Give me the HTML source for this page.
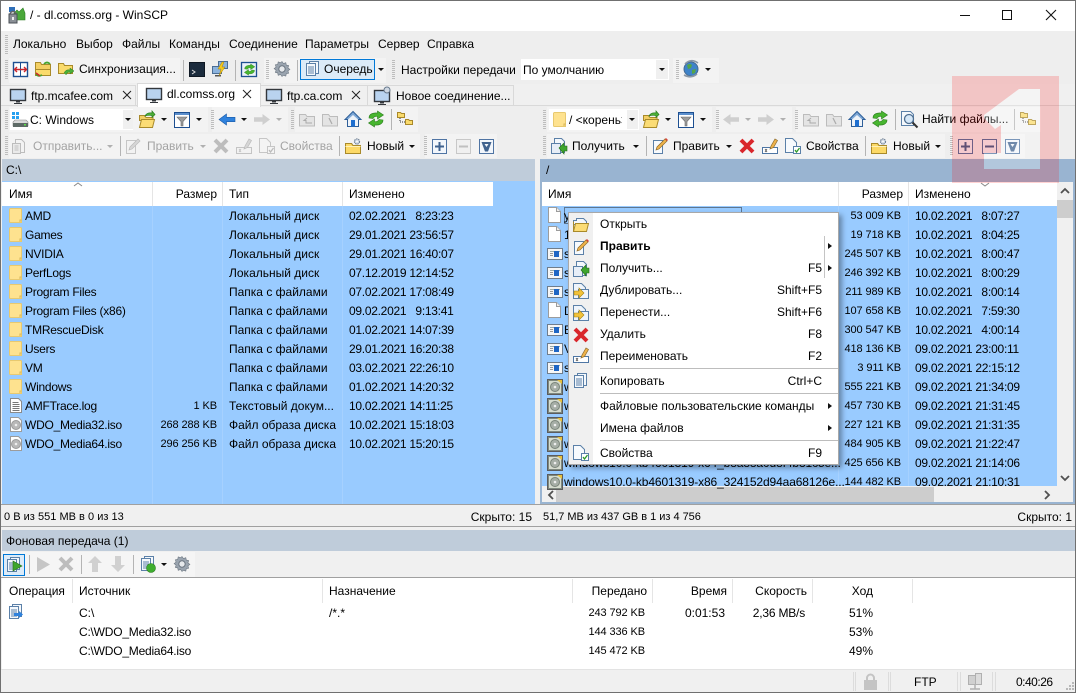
<!DOCTYPE html>
<html lang="ru"><head><meta charset="utf-8"><title>WinSCP</title>
<style>
html,body{margin:0;padding:0}
body{width:1076px;height:693px;position:relative;overflow:hidden;background:#f0f0f0;font:12px/14px "Liberation Sans",sans-serif;color:#000}
.b{position:absolute}
.t,.r span{position:absolute;white-space:nowrap}
.r{position:absolute;left:0;top:0;width:0;height:14px}
.g{color:#a3a3a3}
.n{left:25px;letter-spacing:-.25px}.s{left:100px;width:117px;text-align:right;font-size:11px;letter-spacing:-.1px}.y{left:229px}.d{left:349px;letter-spacing:-.28px}
.N{left:564px;letter-spacing:-.12px}.S{left:760px;width:141px;text-align:right;font-size:11px;letter-spacing:-.1px}.D{left:915px;letter-spacing:-.28px}
.R{text-align:right}
.q{font-size:11px;letter-spacing:-.1px}
svg{position:absolute;left:0;top:0;overflow:visible}
</style></head><body>

<!-- chrome backgrounds -->
<div class="b" style="left:0;top:0;width:1076px;height:31px;background:#fff"></div>
<div class="b" style="left:0;top:31px;width:1076px;height:129px;background:#eeeeee"></div>
<div class="b" style="left:9px;top:58px;width:171px;height:25px;background:#f3f3f3"></div>
<div class="b" style="left:264px;top:58px;width:122px;height:25px;background:#f3f3f3"></div>
<div class="b" style="left:673px;top:58px;width:46px;height:25px;background:#f3f3f3"></div>
<div class="b" style="left:9px;top:107px;width:199px;height:25px;background:#f3f3f3"></div>
<div class="b" style="left:212px;top:107px;width:76px;height:25px;background:#f3f3f3"></div>
<div class="b" style="left:295px;top:107px;width:123px;height:25px;background:#f3f3f3"></div>
<div class="b" style="left:9px;top:134px;width:411px;height:24px;background:#f3f3f3"></div>
<div class="b" style="left:425px;top:134px;width:72px;height:24px;background:#f3f3f3"></div>
<div class="b" style="left:547px;top:107px;width:165px;height:25px;background:#f3f3f3"></div>
<div class="b" style="left:716px;top:107px;width:76px;height:25px;background:#f3f3f3"></div>
<div class="b" style="left:796px;top:107px;width:245px;height:25px;background:#f3f3f3"></div>
<div class="b" style="left:547px;top:134px;width:398px;height:24px;background:#f3f3f3"></div>
<div class="b" style="left:950px;top:134px;width:75px;height:24px;background:#f3f3f3"></div>
<div class="b" style="left:0;top:84px;width:1076px;height:21px;background:#f0f0f0"></div>
<div class="b" style="left:0;top:105px;width:1076px;height:1px;background:#d9d9d9"></div>
<!-- tabs -->
<div class="b" style="left:0;top:85px;width:136px;height:20px;border-right:1px solid #d9d9d9;border-top:1px solid #d9d9d9;box-sizing:border-box"></div>
<div class="b" style="left:261px;top:85px;width:107px;height:20px;border-right:1px solid #d9d9d9;border-top:1px solid #d9d9d9;box-sizing:border-box"></div>
<div class="b" style="left:368px;top:85px;width:146px;height:20px;border-right:1px solid #d9d9d9;border-top:1px solid #d9d9d9;box-sizing:border-box"></div>
<div class="b" style="left:137px;top:83px;width:124px;height:24px;background:#fff;border:1px solid #d9d9d9;border-bottom:0;box-sizing:border-box"></div>

<!-- comboboxes -->
<div class="b" style="left:521px;top:59px;width:148px;height:21px;background:#fff"></div>
<div class="b" style="left:656px;top:60px;width:12px;height:19px;background:#f0f0f0"></div>
<div class="b" style="left:10px;top:109px;width:123px;height:21px;background:#fff"></div>
<div class="b" style="left:123px;top:110px;width:10px;height:19px;background:#f0f0f0"></div>
<div class="b" style="left:549px;top:109px;width:90px;height:21px;background:#fff"></div>
<div class="b" style="left:627px;top:110px;width:11px;height:19px;background:#f0f0f0"></div>

<!-- queue button -->
<div class="b" style="left:300px;top:59px;width:75px;height:21px;background:#dcebf8;border:1px solid #0078d7;box-sizing:border-box"></div>

<!-- panels -->
<div class="b" style="left:2px;top:159px;width:533px;height:22px;background:#bfccda"></div>
<div class="b" style="left:540px;top:159px;width:536px;height:22px;background:#99b4d1"></div>
<div class="b" style="left:2px;top:181px;width:533px;height:323px;background:#99cbff"></div>
<div class="b" style="left:2px;top:182px;width:491px;height:24px;background:#fff"></div>
<div class="b" style="left:540px;top:181px;width:535px;height:323px;background:#f0f0f0;border:2px solid #99b4d1;border-top:1px solid #99b4d1;box-sizing:border-box"></div>
<div class="b" style="left:542px;top:206px;width:515px;height:280px;background:#99cbff"></div>
<div class="b" style="left:542px;top:182px;width:515px;height:24px;background:#fff"></div>
<div class="b" style="left:1057px;top:200px;width:16px;height:18px;background:#cdcdcd"></div>
<div class="b" style="left:556px;top:487px;width:378px;height:15px;background:#cdcdcd"></div>
<!-- header separators -->
<div class="b" style="left:152px;top:182px;width:1px;height:24px;background:#e5e5e5"></div>
<div class="b" style="left:222px;top:182px;width:1px;height:24px;background:#e5e5e5"></div>
<div class="b" style="left:342px;top:182px;width:1px;height:24px;background:#e5e5e5"></div>
<div class="b" style="left:838px;top:182px;width:1px;height:24px;background:#e5e5e5"></div>
<div class="b" style="left:908px;top:182px;width:1px;height:24px;background:#e5e5e5"></div>
<!-- row separators -->
<div class="b" style="left:152px;top:206px;width:1px;height:298px;background:#a6d1ff"></div>
<div class="b" style="left:222px;top:206px;width:1px;height:298px;background:#a6d1ff"></div>
<div class="b" style="left:342px;top:206px;width:1px;height:298px;background:#a6d1ff"></div>
<div class="b" style="left:838px;top:206px;width:1px;height:280px;background:#a6d1ff"></div>
<div class="b" style="left:908px;top:206px;width:1px;height:280px;background:#a6d1ff"></div>

<!-- lower chrome -->
<div class="b" style="left:0;top:504px;width:1076px;height:1px;background:#a0a0a0"></div>
<div class="b" style="left:0;top:526px;width:1076px;height:1px;background:#a0a0a0"></div>
<div class="b" style="left:2px;top:530px;width:1074px;height:21px;background:#bfccda"></div>
<div class="b" style="left:3px;top:552px;width:192px;height:25px;background:#f5f5f5"></div>
<div class="b" style="left:0;top:577px;width:1076px;height:1px;background:#a0a0a0"></div>
<div class="b" style="left:2px;top:578px;width:1073px;height:91px;background:#fff"></div>
<div class="b" style="left:0;top:669px;width:1076px;height:1px;background:#e3e3e3"></div>
<div class="b" style="left:72px;top:579px;width:1px;height:24px;background:#e5e5e5"></div>
<div class="b" style="left:322px;top:579px;width:1px;height:24px;background:#e5e5e5"></div>
<div class="b" style="left:572px;top:579px;width:1px;height:24px;background:#e5e5e5"></div>
<div class="b" style="left:652px;top:579px;width:1px;height:24px;background:#e5e5e5"></div>
<div class="b" style="left:732px;top:579px;width:1px;height:24px;background:#e5e5e5"></div>
<div class="b" style="left:812px;top:579px;width:1px;height:24px;background:#e5e5e5"></div>
<div class="b" style="left:912px;top:579px;width:1px;height:24px;background:#e5e5e5"></div>
<!-- status panels -->
<div class="b" style="left:853px;top:672px;width:1px;height:19px;background:#dcdcdc"></div>
<div class="b" style="left:855px;top:672px;width:1px;height:19px;background:#dcdcdc"></div>
<div class="b" style="left:888px;top:672px;width:1px;height:19px;background:#dcdcdc"></div>
<div class="b" style="left:890px;top:672px;width:1px;height:19px;background:#dcdcdc"></div>
<div class="b" style="left:957px;top:672px;width:1px;height:19px;background:#dcdcdc"></div>
<div class="b" style="left:960px;top:672px;width:1px;height:19px;background:#dcdcdc"></div>
<div class="b" style="left:992px;top:672px;width:1px;height:19px;background:#dcdcdc"></div>
<div class="b" style="left:995px;top:672px;width:1px;height:19px;background:#dcdcdc"></div>

<!-- base icons -->
<svg width="1076" height="693" viewBox="0 0 1076 693">
<defs>
<path id="ar" d="M0 0h6l-3 3z" fill="#111"/>
<path id="arg" d="M0 0h6l-3 3z" fill="#b0b0b0"/>
<path id="grip" d="M1.500 0V20" stroke="#bdbdbd" stroke-width="3" stroke-dasharray="1 1" fill="none"/>
<g id="fo"><path d="M.5 1.500a1 1 0 0 1 1-1h10a1 1 0 0 1 1 1v13h-11a1 1 0 0 1-1-1z" fill="#fee28f" stroke="#e8c96f"/><path d="M11 14v-2h1.500" fill="none" stroke="#d8b65a"/></g>
<g id="fi"><path d="M1.500.5h8l4 4v11h-12z" fill="#fff" stroke="#9c9c9c"/><path d="M9.500.5v4h4" fill="#eee" stroke="#9c9c9c"/></g>
<g id="lo"><path d="M1.500.5h8l3 3v11h-11z" fill="#fff" stroke="#8a8a8a"/><path d="M3.500 4.500h6M3.500 6.500h7M3.500 8.500h7M3.500 10.500h7M3.500 12.500h7" stroke="#777"/></g>
<g id="is"><path d="M1.500.5h8l3 3v11h-11z" fill="#fff" stroke="#9c9c9c"/><circle cx="7" cy="8" r="4.500" fill="#b8b8b8" stroke="#9a9a9a"/><circle cx="7" cy="8" r="1.300" fill="#eee"/></g>
<g id="ex"><rect x=".5" y="2.500" width="15" height="11" fill="#f6f6f6" stroke="#6f7d8c"/><rect x="3" y="5" width="10" height="1" fill="#9aa"/><rect x="7" y="5" width="5" height="6" fill="#1f66c4"/><path d="M3 7.500h3M3 9.500h3" stroke="#999"/></g>
<g id="ms"><rect x=".5" y="1.500" width="15" height="15" fill="#7f897f" stroke="#5c5c5c"/><rect x="2" y="3" width="12" height="12" fill="#d6dccf"/><circle cx="8" cy="9" r="4.500" fill="#a6aea6" stroke="#7a847a"/><circle cx="8" cy="9" r="1.300" fill="#eee"/><path d="M10 2h5v4z" fill="#e8c13c"/></g>
<g id="op"><path d="M.5 3.500h5l1.500 2h7v3H.5z" fill="#f3cf63" stroke="#a98a2a"/><path d="M.5 15.500l2-8h13l-2 8z" fill="#fbdc75" stroke="#a98a2a"/><path d="M6 4q2-4 7-3V-1l3 3.500-3 3V3.500q-4-.5-7 .5z" fill="#4caf38" stroke="#2b7d20" stroke-width=".7"/></g>
<g id="op2"><path d="M.5 4.500h3v-2h7l3 3v3H.5z" fill="#f3f7fb" stroke="#5b80a8"/><path d="M.5 15.500l2-8h13l-2 8z" fill="#fbdc75" stroke="#a98a2a"/><path d="M.5 15.500v-10" stroke="#a98a2a"/></g>
<g id="fl"><rect x=".5" y=".5" width="15" height="15" fill="#fff" stroke="#1d4f91"/><rect x="1" y="1" width="14" height="2" fill="#5c8fcc"/><path d="M3 5h10l-4 4.500v4.500h-2v-4.500z" fill="#9c9c9c" stroke="#6b6b6b" stroke-width=".6"/></g>
<path id="bk" d="M0 6.500L7.500 1v3.300H16v4.400H7.500V12z" fill="#2f82dd" stroke="#1c5ca8" stroke-width=".6"/>
<path id="bkg" d="M0 6.500L7.500 1v3.300H16v4.400H7.500V12z" fill="#cfcfcf"/>
<path id="fwg" d="M16 6.500L8.500 1v3.300H0v4.400h8.500V12z" fill="#cfcfcf"/>
<g id="pa"><path d="M.5 3.500h6l1.500 2h7.500v9.500H.5z" fill="#e4e4e4" stroke="#bcbcbc"/><path d="M8 7l-3 2.500h2v2.500h6" fill="none" stroke="#aaa"/></g>
<g id="ro"><path d="M.5 3.500h6l1.500 2h7.500v9.500H.5z" fill="#e4e4e4" stroke="#bcbcbc"/><path d="M7 7l3 6" fill="none" stroke="#aaa" stroke-width="1.200"/></g>
<g id="ho"><path d="M8 .5L0 8.500h2.500v7h11v-7H16z" fill="#7da7d6" stroke="#2e5f99"/><path d="M3 8.500L8 4l5 4.500v6.500H3z" fill="#eef3f9"/><rect x="6" y="9" width="4" height="6.500" fill="#1e6fd0"/></g>
<g id="rf"><path d="M1 7C1 3 5 1.500 9.500 2V0L15.500 4 9.500 8V5.500C7.500 5 5.500 6 5 7.500z" fill="#47b52f" stroke="#2c7d1e" stroke-width=".6"/><path d="M15 9C15 13 11 14.500 6.500 14V16L.5 12 6.500 8V10.500C8.500 11 10.500 10 11 8.500z" fill="#47b52f" stroke="#2c7d1e" stroke-width=".6"/></g>
<g id="tr"><path d="M.5 1.500h3l1 1h3v4h-7z" fill="#fadb6c" stroke="#a9882a"/><path d="M8.500 8.500h3l1 1h3v4h-7z" fill="#fadb6c" stroke="#a9882a"/><path d="M3 7v4h5" fill="none" stroke="#333" stroke-dasharray="1 1"/></g>
<g id="du"><path d="M3.500 1.500h6l3 3v10h-9z" fill="#f3f3f3" stroke="#bdbdbd"/><rect x=".5" y="5.500" width="8" height="10" fill="#eaeaea" stroke="#bdbdbd"/><path d="M2.500 8h4M2.500 10h4M2.500 12h4" stroke="#c0c0c0"/></g>
<g id="xg"><path d="M2 2l12 12M14 2L2 14" stroke="#bdbdbd" stroke-width="4"/></g>
<g id="xr"><path d="M2 2l12 12M14 2L2 14" stroke="#d9262b" stroke-width="4"/></g>
<g id="ed"><path d="M1.500 2.500h9v13h-9z" fill="#f7fafd" stroke="#5b80a8"/><path d="M4 12l1-3 8-8 2 2-8 8z" fill="#efb34a" stroke="#8c6a2c" stroke-width=".7"/><path d="M13 1l2 2 1-1-2-2z" fill="#d9413a"/></g>
<g id="edg"><path d="M1.500 2.500h9v13h-9z" fill="#f2f2f2" stroke="#c6c6c6"/><path d="M4 12l1-3 8-8 2 2-8 8z" fill="#d6d6d6" stroke="#bbb" stroke-width=".7"/></g>
<g id="rn"><rect x=".5" y="8.500" width="15" height="6" fill="#fff" stroke="#4e76a4"/><path d="M3 10l2 3M5 10l-2 3" stroke="#555" stroke-width=".8"/><path d="M8 10l1-3 4-7 2.500 1.500-4 7z" fill="#efb34a" stroke="#8c6a2c" stroke-width=".7"/></g>
<g id="rng"><rect x=".5" y="8.500" width="15" height="6" fill="#f2f2f2" stroke="#c4c4c4"/><path d="M3 10l2 3M5 10l-2 3" stroke="#c0c0c0" stroke-width=".8"/><path d="M8 10l1-3 4-7 2.500 1.500-4 7z" fill="#d6d6d6" stroke="#bbb" stroke-width=".7"/></g>
<g id="pr"><path d="M.5.500h7l4 4v10h-11z" fill="#f7fafd" stroke="#5b80a8"/><rect x="8.500" y="8.500" width="7" height="7" fill="#fff" stroke="#5b80a8"/><path d="M10 12l1.500 2 3-4" fill="none" stroke="#2f9a2a" stroke-width="1.300"/></g>
<g id="prg"><path d="M.5.500h7l4 4v10h-11z" fill="#f4f4f4" stroke="#c6c6c6"/><rect x="8.500" y="8.500" width="7" height="7" fill="#f4f4f4" stroke="#c6c6c6"/><path d="M10 12l1.500 2 3-4" fill="none" stroke="#bbb" stroke-width="1.300"/></g>
<g id="nw"><path d="M.5 5.500h6l1.500 2h7.500v8H.5z" fill="#fcd967" stroke="#a98a2a"/><path d="M.5 5.500h6l1.500 2" fill="none" stroke="#a98a2a"/><path d="M.5 8.500h15" stroke="#fff2b8"/><circle cx="12" cy="3.500" r="2.600" fill="#cfd8e3" stroke="#66788c" stroke-dasharray="1.500 .7"/><circle cx="12" cy="3.500" r=".9" fill="#fff"/></g>
<g id="pl"><rect x=".5" y=".5" width="14" height="14" fill="#f2f6fb" stroke="#4f74a3"/><path d="M3 7.500h9M7.500 3v9" stroke="#3f628f" stroke-width="2"/></g>
<g id="mb"><rect x=".5" y=".5" width="14" height="14" fill="#f2f6fb" stroke="#4f74a3"/><path d="M3 7.500h9" stroke="#3f628f" stroke-width="2"/></g>
<g id="mi"><rect x=".5" y=".5" width="14" height="14" fill="#f0f0f0" stroke="#c8c8c8"/><path d="M3 7.500h9" stroke="#c0c0c0" stroke-width="2"/></g>
<g id="fa"><rect x=".5" y=".5" width="14" height="14" fill="#f2f6fb" stroke="#4f74a3"/><path d="M2.500 3h10L9 12.500H6z" fill="#3f628f"/><path d="M5.500 5h4L7.500 8z" fill="#f2f6fb"/></g>
<g id="ge"><path d="M8 .5l1.500 2 2.300-.8.500 2.400 2.400.5-.8 2.300 2 1.500-2 1.500.8 2.300-2.400.5-.5 2.400-2.300-.8L8 15.500l-1.500-2-2.300.8-.5-2.400-2.400-.5.8-2.300-2-1.500 2-1.500-.8-2.300 2.400-.5.5-2.400 2.300.8z" fill="#9aa4af" stroke="#6d7782" stroke-width=".6"/><circle cx="8" cy="8" r="3.200" fill="#e6e9ec" stroke="#6d7782"/></g>
<g id="mo"><rect x=".5" y=".5" width="15" height="11" fill="#b9d3ef" stroke="#33373c" stroke-width="1.400"/><path d="M6 12h4v1.500H6zM4 14h8v1H4z" fill="#33373c"/></g>
<g id="qu"><rect x="5.500" y=".5" width="9" height="12" fill="#f4f8fc" stroke="#5b80a8"/><rect x="2.500" y="2.500" width="9" height="12" fill="#f4f8fc" stroke="#5b80a8"/><path d="M4 6h6M4 8h6M4 10h6M4 12h6" stroke="#5b80a8"/></g>
<g id="gp"><path d="M1.500 0v14" stroke="#bdbdbd" stroke-width="1"/></g>
</defs>

<!-- title icon -->
<rect x="9" y="7" width="6" height="5" fill="#2f6fb8"/>
<path d="M14 13l3-3 2 2 4-4 2 5v7H14z" fill="#4aa83a" stroke="#2b7d20" stroke-width=".6"/>
<path d="M10 14.500a3 3 0 0 1 6 0" fill="none" stroke="#666" stroke-width="1.500"/>
<rect x="9" y="14" width="8" height="9" fill="#8a8f96" stroke="#4a4f55"/>
<rect x="12" y="17" width="2" height="3" fill="#eee"/>
<!-- window buttons -->
<path d="M960 15.500h10" stroke="#111"/>
<rect x="1002.500" y="10.500" width="9" height="9" fill="none" stroke="#111"/>
<path d="M1046 10l10 10M1056 10l-10 10" stroke="#111" stroke-width="1.100"/>
<!-- grips -->
<use href="#grip" x="5" y="35"/><use href="#grip" x="5" y="60"/><use href="#grip" x="5" y="110"/><use href="#grip" x="5" y="136"/>
<use href="#grip" x="266" y="60"/><use href="#grip" x="392" y="60"/><use href="#grip" x="676" y="60"/>
<use href="#grip" x="211" y="110"/><use href="#grip" x="291" y="110"/><use href="#grip" x="424" y="136"/>
<use href="#grip" x="543" y="110"/><use href="#grip" x="543" y="136"/><use href="#grip" x="716" y="110"/><use href="#grip" x="795" y="110"/><use href="#grip" x="950" y="136"/>
<!-- seps -->
<path d="M183.500 60v21M235.500 60v21M297.500 60v21M120.500 136v20M339.500 136v20M391.500 109v21M895.500 109v21M1014.500 109v21M646.500 136v20M865.500 136v20M29.500 555v19M81.500 555v19M133.500 555v19" stroke="#b4b4b4"/>

<!-- row 2 -->
<rect x="13.500" y="62.500" width="14" height="14" fill="#fff" stroke="#1d4f91" stroke-width="1.400"/>
<path d="M20.500 62v15" stroke="#1d4f91"/>
<path d="M15 69.500h11M17 67l-2.500 2.500L17 72M24 67l2.500 2.500L24 72" fill="none" stroke="#c9252b" stroke-width="1.400"/>
<g transform="translate(35 61)"><path d="M.5 1.500h5l1 2h9v5H.5z" fill="#f3cf63" stroke="#a98a2a"/><path d="M.5 8.500h15v6H.5z" fill="#fadb6c" stroke="#a98a2a"/><path d="M9 3q3-3 6 0M1 13q2 3 6 1" fill="none" stroke="#47a52f" stroke-width="1.800"/><path d="M1 12l4 3" stroke="#cf2b2b" stroke-width="1.500"/></g>
<g transform="translate(58 61)"><path d="M.5 2.500h5l1 2h8v8H.5z" fill="#fadb6c" stroke="#a98a2a"/><path d="M6 12q2-4 6-3V7l4 3-4 3v-2q-3 0-4 3" fill="#4caf38" stroke="#2b7d20" stroke-width=".5"/></g>
<rect x="189.500" y="62.500" width="15" height="14" fill="#1b2b3d" stroke="#0e1722"/>
<path d="M192 70l3 2-3 2" fill="none" stroke="#ddd"/>
<g transform="translate(212 61)"><rect x="6.500" y=".5" width="9" height="7" fill="#8cb3dd" stroke="#4b6d94"/><rect x=".5" y="5.500" width="9" height="7" fill="#8cb3dd" stroke="#4b6d94"/><path d="M3 14h6v1.500H3z" fill="#555"/><path d="M10 1l-4 7h3l-2 7 6-9h-3l2-5z" fill="#f4c81c" stroke="#a8820f" stroke-width=".5"/></g>
<rect x="241.500" y="62.500" width="15" height="14" fill="#eaf1f9" stroke="#1d4f91" stroke-width="1.300"/>
<use href="#rf" transform="translate(244 64) scale(.7)"/>
<use href="#ge" x="274" y="61"/>
<use href="#qu" x="304" y="61"/>
<use href="#ar" x="378" y="68"/>
<use href="#ar" x="659" y="68"/>
<g transform="translate(683 61)"><circle cx="8" cy="8" r="7" fill="#3f83c9" stroke="#456a91"/><path d="M4 4q3-2 5 0l-1 3-3 1zM9 9l4-1-1 4-3 1z" fill="#54a548"/><path d="M2 3q6-6 13-1M14 13Q8 18 1 14" fill="none" stroke="#8b98a6" stroke-width="1.600"/></g>
<use href="#ar" x="705" y="68"/>

<!-- tabs -->
<use href="#mo" x="10" y="89"/><path d="M123 91l8 8M131 91l-8 8" stroke="#222"/>
<use href="#mo" x="146" y="88"/><path d="M243 90l8 8M251 90l-8 8" stroke="#222"/>
<use href="#mo" x="266" y="89"/><path d="M352 91l8 8M360 91l-8 8" stroke="#222"/>
<use href="#mo" x="374" y="90"/><circle cx="387" cy="90" r="3" fill="#cfd8e3" stroke="#66788c"/>

<!-- left row 4 -->
<g transform="translate(12 112)"><rect x="0" y="0" width="3" height="3" fill="#26a0f0"/><rect x="4" y="0" width="3" height="3" fill="#26a0f0"/><rect x="0" y="4" width="3" height="3" fill="#26a0f0"/><rect x="4" y="4" width="3" height="3" fill="#26a0f0"/><path d="M1 10l2-2h11l2 2v4H1z" fill="#d9d9d9" stroke="#8a8a8a" stroke-width=".6"/><rect x="1" y="11" width="15" height="4" fill="#5e6a66"/><rect x="12" y="12" width="2" height="1.500" fill="#5fe04a"/></g>
<use href="#ar" x="125" y="118"/>
<use href="#op" x="139" y="112"/><use href="#ar" x="161" y="118"/>
<use href="#fl" x="174" y="112"/><use href="#ar" x="196" y="118"/>
<use href="#bk" x="219" y="113"/><use href="#ar" x="241" y="118"/>
<use href="#fwg" x="254" y="113"/><use href="#arg" x="276" y="118"/>
<use href="#pa" x="299" y="111"/><use href="#ro" x="322" y="111"/><use href="#ho" x="345" y="111"/><use href="#rf" x="368" y="111"/><use href="#tr" x="397" y="111"/>
<!-- left row 5 -->
<use href="#du" x="12" y="138"/><use href="#arg" x="107" y="145"/>
<use href="#edg" x="125" y="138"/><use href="#arg" x="200" y="145"/>
<use href="#xg" x="213" y="138"/><use href="#rng" x="236" y="139"/><use href="#prg" x="259" y="138"/>
<use href="#nw" x="345" y="138"/><use href="#ar" x="409" y="145"/>
<use href="#pl" x="432" y="139"/><use href="#mi" x="456" y="139"/><use href="#fa" x="479" y="139"/>

<!-- right row 4 -->
<use href="#fo" x="553" y="112"/><use href="#ar" x="629" y="118"/>
<use href="#op" x="643" y="112"/><use href="#ar" x="665" y="118"/>
<use href="#fl" x="678" y="112"/><use href="#ar" x="700" y="118"/>
<use href="#bkg" x="723" y="113"/><use href="#arg" x="745" y="118"/>
<use href="#fwg" x="758" y="113"/><use href="#arg" x="780" y="118"/>
<use href="#pa" x="803" y="111"/><use href="#ro" x="826" y="111"/><use href="#ho" x="849" y="111"/><use href="#rf" x="872" y="111"/>
<g transform="translate(901 111)"><path d="M.5.500h9l3 3v11H.5z" fill="#f4f8fc" stroke="#5b80a8"/><circle cx="8" cy="8" r="4.500" fill="#d6e8f8" stroke="#4f6f91" stroke-width="1.300"/><path d="M11.500 11.500l5 5" stroke="#333" stroke-width="2"/></g>
<use href="#tr" x="1020" y="111"/>
<!-- right row 5 -->
<g transform="translate(551 138)"><path d="M3.500.5h7l3 3v11h-10z" fill="#f4f8fc" stroke="#5b80a8"/><rect x=".5" y="5.500" width="9" height="10" fill="#e7eef7" stroke="#5b80a8"/><path d="M9 9l5-5v3h3v5h-3v3z" fill="#3ea52e" stroke="#236f18" stroke-width=".6" transform="translate(-1 1)"/></g>
<use href="#ar" x="633" y="145"/>
<use href="#ed" x="652" y="138"/><use href="#ar" x="726" y="145"/>
<use href="#xr" x="739" y="138"/><use href="#rn" x="762" y="139"/><use href="#pr" x="785" y="138"/>
<use href="#nw" x="871" y="138"/><use href="#ar" x="935" y="145"/>
<use href="#pl" x="958" y="139"/><use href="#mb" x="982" y="139"/>
<use href="#fa" x="1005" y="139"/>

<!-- header carets -->
<path d="M74 186l4-3 4 3" fill="none" stroke="#888"/>
<path d="M981 183l4 3 4-3" fill="none" stroke="#888"/>
<!-- scroll arrows -->
<path d="M1061 193l4-4 4 4" fill="none" stroke="#505050" stroke-width="1.800"/>
<path d="M1061 476l4 4 4-4" fill="none" stroke="#505050" stroke-width="1.800"/>
<path d="M553 491l-4 4 4 4" fill="none" stroke="#505050" stroke-width="1.800"/>
<path d="M1045 491l4 4-4 4" fill="none" stroke="#505050" stroke-width="1.800"/>

<!-- left list icons -->
<use href="#fo" x="9" y="208"/><use href="#fo" x="9" y="227"/><use href="#fo" x="9" y="246"/><use href="#fo" x="9" y="265"/><use href="#fo" x="9" y="284"/><use href="#fo" x="9" y="303"/><use href="#fo" x="9" y="322"/><use href="#fo" x="9" y="341"/><use href="#fo" x="9" y="360"/><use href="#fo" x="9" y="379"/>
<use href="#lo" x="9" y="398"/><use href="#is" x="9" y="417"/><use href="#is" x="9" y="436"/>
<!-- right list icons -->
<use href="#fi" x="547" y="207"/><use href="#fi" x="547" y="226"/><use href="#ex" x="547" y="246"/><use href="#ex" x="547" y="265"/><use href="#ex" x="547" y="284"/><use href="#fi" x="547" y="302"/><use href="#ex" x="547" y="322"/><use href="#ex" x="547" y="341"/><use href="#ex" x="547" y="360"/>
<use href="#ms" x="547" y="378"/><use href="#ms" x="547" y="397"/><use href="#ms" x="547" y="416"/><use href="#ms" x="547" y="435"/><use href="#ms" x="547" y="454"/><use href="#ms" x="547" y="473"/>
<rect x="564.500" y="207.500" width="177" height="16" fill="none" stroke="#222" stroke-dasharray="1 1"/>

<!-- queue toolbar -->
<rect x="3.500" y="554.500" width="21" height="21" fill="#dcebf8" stroke="#0078d7"/>
<use href="#qu" x="5" y="557"/>
<path d="M13 561l9 5-9 5z" fill="#3ea52e" stroke="#236f18" stroke-width=".6"/>
<path d="M37 557l13 7.500-13 7.500z" fill="#c6c6c6"/>
<use href="#xg" x="58" y="556"/>
<path d="M95 556l7 7h-4v9h-6v-9h-4z" fill="#d0d0d0"/>
<path d="M118 572l7-7h-4v-9h-6v9h-4z" fill="#d0d0d0"/>
<use href="#qu" x="139" y="556"/><circle cx="151" cy="568" r="4.500" fill="#3fae2f" stroke="#27791c" stroke-width=".6"/>
<use href="#ar" x="161" y="563"/>
<use href="#ge" x="174" y="556"/>
<!-- queue op icon -->
<use href="#qu" x="7" y="604"/><path d="M14 613h5v-2l4 3.500-4 3.500v-2h-5z" fill="#2f82dd"/>
<!-- status icons -->
<g fill="#c4c4c4"><path d="M866 678a4.500 4.500 0 0 1 9 0v2h-2v-2a2.500 2.500 0 0 0-5 0v2h-2z"/><rect x="864" y="680" width="13" height="10"/></g>
<g><rect x="968.500" y="675.500" width="11" height="9" fill="#d0d0d0" stroke="#b0b0b0"/><rect x="975.500" y="673.500" width="6" height="11" fill="#dcdcdc" stroke="#b0b0b0"/><path d="M975 685v4M970 689h10" stroke="#b0b0b0" stroke-width="1.500"/></g>
<g fill="#b8b8b8"><rect x="1072" y="682" width="2" height="2"/><rect x="1069" y="685" width="2" height="2"/><rect x="1072" y="685" width="2" height="2"/><rect x="1066" y="688" width="2" height="2"/><rect x="1069" y="688" width="2" height="2"/><rect x="1072" y="688" width="2" height="2"/></g>
</svg>

<!-- text -->
<span class="t" style="left:30px;top:8px">/ - dl.comss.org - WinSCP</span>
<span class="t" style="left:13px;top:37px">Локально</span>
<span class="t" style="left:76px;top:37px">Выбор</span>
<span class="t" style="left:122px;top:37px">Файлы</span>
<span class="t" style="left:169px;top:37px">Команды</span>
<span class="t" style="left:229px;top:37px">Соединение</span>
<span class="t" style="left:305px;top:37px">Параметры</span>
<span class="t" style="left:378px;top:37px">Сервер</span>
<span class="t" style="left:427px;top:37px">Справка</span>

<span class="t" style="left:79px;top:62px">Синхронизация...</span>
<span class="t" style="left:324px;top:62px">Очередь</span>
<span class="t" style="left:401px;top:63px">Настройки передачи</span>
<span class="t" style="left:523px;top:63px">По умолчанию</span>

<span class="t" style="left:31px;top:89px">ftp.mcafee.com</span>
<span class="t" style="left:167px;top:87px">dl.comss.org</span>
<span class="t" style="left:287px;top:89px">ftp.ca.com</span>
<span class="t" style="left:396px;top:89px">Новое соединение...</span>

<span class="t" style="left:30px;top:113px">C: Windows</span>
<span class="t" style="left:569px;top:113px;width:53px;overflow:hidden">/ &lt;корень&gt;</span>
<span class="t" style="left:922px;top:112px">Найти файлы...</span>

<span class="t g" style="left:33px;top:139px">Отправить...</span>
<span class="t g" style="left:147px;top:139px">Править</span>
<span class="t g" style="left:280px;top:139px">Свойства</span>
<span class="t" style="left:367px;top:139px">Новый</span>
<span class="t" style="left:572px;top:139px">Получить</span>
<span class="t" style="left:673px;top:139px">Править</span>
<span class="t" style="left:806px;top:139px">Свойства</span>
<span class="t" style="left:893px;top:139px">Новый</span>

<span class="t" style="left:6px;top:163px">C:\</span>
<span class="t" style="left:546px;top:163px">/</span>

<span class="t" style="left:9px;top:187px">Имя</span>
<span class="t R" style="left:120px;top:187px;width:97px">Размер</span>
<span class="t" style="left:229px;top:187px">Тип</span>
<span class="t" style="left:349px;top:187px">Изменено</span>
<span class="t" style="left:548px;top:187px">Имя</span>
<span class="t R" style="left:800px;top:187px;width:103px">Размер</span>
<span class="t" style="left:915px;top:187px">Изменено</span>

<!-- left rows -->
<div class="r" style="top:209px"><span class="n">AMD</span><span class="y">Локальный диск</span><span class="d">02.02.2021&nbsp;&nbsp;&nbsp;8:23:23</span></div>
<div class="r" style="top:228px"><span class="n">Games</span><span class="y">Локальный диск</span><span class="d">29.01.2021 23:56:57</span></div>
<div class="r" style="top:247px"><span class="n">NVIDIA</span><span class="y">Локальный диск</span><span class="d">29.01.2021 16:40:07</span></div>
<div class="r" style="top:266px"><span class="n">PerfLogs</span><span class="y">Локальный диск</span><span class="d">07.12.2019 12:14:52</span></div>
<div class="r" style="top:285px"><span class="n">Program Files</span><span class="y">Папка с файлами</span><span class="d">07.02.2021 17:08:49</span></div>
<div class="r" style="top:304px"><span class="n">Program Files (x86)</span><span class="y">Папка с файлами</span><span class="d">09.02.2021&nbsp;&nbsp;&nbsp;9:13:41</span></div>
<div class="r" style="top:323px"><span class="n">TMRescueDisk</span><span class="y">Папка с файлами</span><span class="d">01.02.2021 14:07:39</span></div>
<div class="r" style="top:342px"><span class="n">Users</span><span class="y">Папка с файлами</span><span class="d">29.01.2021 16:20:38</span></div>
<div class="r" style="top:361px"><span class="n">VM</span><span class="y">Папка с файлами</span><span class="d">03.02.2021 22:26:10</span></div>
<div class="r" style="top:380px"><span class="n">Windows</span><span class="y">Папка с файлами</span><span class="d">01.02.2021 14:20:32</span></div>
<div class="r" style="top:399px"><span class="n">AMFTrace.log</span><span class="s">1 KB</span><span class="y">Текстовый докум...</span><span class="d">10.02.2021 14:11:25</span></div>
<div class="r" style="top:418px"><span class="n">WDO_Media32.iso</span><span class="s">268 288 KB</span><span class="y">Файл образа диска</span><span class="d">10.02.2021 15:18:03</span></div>
<div class="r" style="top:437px"><span class="n">WDO_Media64.iso</span><span class="s">296 256 KB</span><span class="y">Файл образа диска</span><span class="d">10.02.2021 15:20:15</span></div>

<!-- right rows -->
<div class="r" style="top:209px"><span class="N">y</span><span class="S">53 009 KB</span><span class="D">10.02.2021&nbsp;&nbsp;&nbsp;8:07:27</span></div>
<div class="r" style="top:228px"><span class="N">1</span><span class="S">19 718 KB</span><span class="D">10.02.2021&nbsp;&nbsp;&nbsp;8:04:25</span></div>
<div class="r" style="top:247px"><span class="N">s</span><span class="S">245 507 KB</span><span class="D">10.02.2021&nbsp;&nbsp;&nbsp;8:00:47</span></div>
<div class="r" style="top:266px"><span class="N">s</span><span class="S">246 392 KB</span><span class="D">10.02.2021&nbsp;&nbsp;&nbsp;8:00:29</span></div>
<div class="r" style="top:285px"><span class="N">s</span><span class="S">211 989 KB</span><span class="D">10.02.2021&nbsp;&nbsp;&nbsp;8:00:14</span></div>
<div class="r" style="top:304px"><span class="N">D</span><span class="S">107 658 KB</span><span class="D">10.02.2021&nbsp;&nbsp;&nbsp;7:59:30</span></div>
<div class="r" style="top:323px"><span class="N">E</span><span class="S">300 547 KB</span><span class="D">10.02.2021&nbsp;&nbsp;&nbsp;4:00:14</span></div>
<div class="r" style="top:342px"><span class="N">V</span><span class="S">418 136 KB</span><span class="D">09.02.2021 23:00:11</span></div>
<div class="r" style="top:361px"><span class="N">s</span><span class="S">3 911 KB</span><span class="D">09.02.2021 22:15:12</span></div>
<div class="r" style="top:380px"><span class="N">w</span><span class="S">555 221 KB</span><span class="D">09.02.2021 21:34:09</span></div>
<div class="r" style="top:399px"><span class="N">w</span><span class="S">457 730 KB</span><span class="D">09.02.2021 21:31:45</span></div>
<div class="r" style="top:418px"><span class="N">w</span><span class="S">227 121 KB</span><span class="D">09.02.2021 21:31:35</span></div>
<div class="r" style="top:437px"><span class="N">w</span><span class="S">484 905 KB</span><span class="D">09.02.2021 21:22:47</span></div>
<div class="r" style="top:456px"><span class="N">windows10.0-kb4601319-x64_b8a88a0d8f4b31c5e...</span><span class="S">425 656 KB</span><span class="D">09.02.2021 21:14:06</span></div>
<div class="r" style="top:475px"><span class="N">windows10.0-kb4601319-x86_324152d94aa68126e...</span><span class="S">144 482 KB</span><span class="D">09.02.2021 21:10:31</span></div>

<!-- status -->
<span class="t" style="left:4px;top:510px;font-size:11px;letter-spacing:.02px">0 В из 551 MB в 0 из 13</span>
<span class="t R" style="left:400px;top:510px;width:132px">Скрыто: 15</span>
<span class="t" style="left:543px;top:510px;font-size:11px;letter-spacing:-.02px">51,7 MB из 437 GB в 1 из 4 756</span>
<span class="t R" style="left:940px;top:510px;width:132px">Скрыто: 1</span>

<span class="t" style="left:6px;top:534px">Фоновая передача (1)</span>

<span class="t" style="left:9px;top:584px">Операция</span>
<span class="t" style="left:79px;top:584px">Источник</span>
<span class="t" style="left:329px;top:584px">Назначение</span>
<span class="t R" style="left:547px;top:584px;width:100px">Передано</span>
<span class="t R" style="left:627px;top:584px;width:100px">Время</span>
<span class="t R" style="left:707px;top:584px;width:100px">Скорость</span>
<span class="t R" style="left:773px;top:584px;width:100px">Ход</span>

<span class="t" style="left:79px;top:606px">C:\</span>
<span class="t" style="left:329px;top:606px">/*.*</span>
<span class="t R q" style="left:545px;top:606px;width:100px">243 792 KB</span>
<span class="t R" style="left:625px;top:606px;width:100px">0:01:53</span>
<span class="t R" style="left:705px;top:606px;width:100px;letter-spacing:-.2px">2,36 MB/s</span>
<span class="t R" style="left:773px;top:606px;width:100px">51%</span>
<span class="t" style="left:79px;top:625px;letter-spacing:-.22px">C:\WDO_Media32.iso</span>
<span class="t R q" style="left:545px;top:625px;width:100px">144 336 KB</span>
<span class="t R" style="left:773px;top:625px;width:100px">53%</span>
<span class="t" style="left:79px;top:644px;letter-spacing:-.22px">C:\WDO_Media64.iso</span>
<span class="t R q" style="left:545px;top:644px;width:100px">145 472 KB</span>
<span class="t R" style="left:773px;top:644px;width:100px">49%</span>

<span class="t" style="left:914px;top:675px">FTP</span>
<span class="t" style="left:1016px;top:675px;letter-spacing:-.5px">0:40:26</span>

<!-- context menu -->
<div class="b" style="left:568px;top:212px;width:271px;height:253px;background:#fff;border:1px solid #a8a8a8;box-sizing:border-box;box-shadow:3px 3px 5px rgba(0,0,0,.35)"></div>
<div class="b" style="left:569px;top:213px;width:24px;height:251px;background:#f0f0f0"></div>
<div class="b" style="left:600px;top:368px;width:238px;height:1px;background:#bdbdbd"></div>
<div class="b" style="left:600px;top:393px;width:238px;height:1px;background:#bdbdbd"></div>
<div class="b" style="left:600px;top:440px;width:238px;height:1px;background:#bdbdbd"></div>
<div class="b" style="left:824px;top:236px;width:1px;height:42px;background:#c4c4c4"></div>
<svg width="1076" height="693" viewBox="0 0 1076 693">
<use href="#op2" x="573" y="216"/>
<use href="#ed" x="573" y="239"/>
<g transform="translate(573 261)"><path d="M3.500.5h7l3 3v11h-10z" fill="#f4f8fc" stroke="#5b80a8"/><rect x=".5" y="5.500" width="9" height="10" fill="#e7eef7" stroke="#5b80a8"/><path d="M8 9l5-5v3h3v5h-3v3z" fill="#3ea52e" stroke="#236f18" stroke-width=".6"/></g>
<g transform="translate(573 283)"><path d="M.5.500h8l4 4v11H.5z" fill="#eef4fb" stroke="#5b80a8"/><rect x="5.500" y="6.500" width="10" height="9" fill="#eef4fb" stroke="#5b80a8"/><path d="M1 8h5V5l5 5-5 5v-3H1z" fill="#f2c23a" stroke="#a8820f" stroke-width=".6"/></g>
<g transform="translate(573 305)"><path d="M.5.500h8l4 4v11H.5z" fill="#eef4fb" stroke="#5b80a8"/><rect x="5.500" y="6.500" width="10" height="9" fill="#eef4fb" stroke="#5b80a8"/><path d="M1 8h5V5l5 5-5 5v-3H1z" fill="#f2c23a" stroke="#a8820f" stroke-width=".6"/></g>
<use href="#xr" x="573" y="327"/>
<use href="#rn" x="573" y="348"/>
<use href="#qu" x="572" y="373"/>
<use href="#pr" x="573" y="445"/>
<g fill="#111"><path d="M828 243l4 3-4 3z"/><path d="M828 265l4 3-4 3z"/><path d="M828 403l4 3-4 3z"/><path d="M828 425l4 3-4 3z"/></g>
</svg>
<span class="t" style="left:600px;top:217px">Открыть</span>
<span class="t" style="left:600px;top:239px;font-weight:bold">Править</span>
<span class="t" style="left:600px;top:261px">Получить...</span>
<span class="t R" style="left:722px;top:261px;width:100px">F5</span>
<span class="t" style="left:600px;top:283px">Дублировать...</span>
<span class="t R" style="left:722px;top:283px;width:100px">Shift+F5</span>
<span class="t" style="left:600px;top:305px">Перенести...</span>
<span class="t R" style="left:722px;top:305px;width:100px">Shift+F6</span>
<span class="t" style="left:600px;top:327px">Удалить</span>
<span class="t R" style="left:722px;top:327px;width:100px">F8</span>
<span class="t" style="left:600px;top:349px">Переименовать</span>
<span class="t R" style="left:722px;top:349px;width:100px">F2</span>
<span class="t" style="left:600px;top:374px">Копировать</span>
<span class="t R" style="left:722px;top:374px;width:100px">Ctrl+C</span>
<span class="t" style="left:600px;top:399px">Файловые пользовательские команды</span>
<span class="t" style="left:600px;top:421px">Имена файлов</span>
<span class="t" style="left:600px;top:446px">Свойства</span>
<span class="t R" style="left:722px;top:446px;width:100px">F9</span>

<!-- watermark -->
<svg width="1076" height="693" viewBox="0 0 1076 693">
<path fill-rule="evenodd" fill="rgba(255,0,0,.175)" d="M952 76H1059V183H952ZM1019 89H1040V169H984V153H1001V125L995 129L984 118V115Z"/>
<path fill="rgba(255,255,255,.25)" d="M1019 89H1040V169H984V153H1001V125L995 129L984 118V115Z"/>
</svg>

<!-- window border -->
<div class="b" style="left:0;top:0;width:1076px;height:693px;border:1px solid #707070;box-sizing:border-box"></div>
</body></html>
